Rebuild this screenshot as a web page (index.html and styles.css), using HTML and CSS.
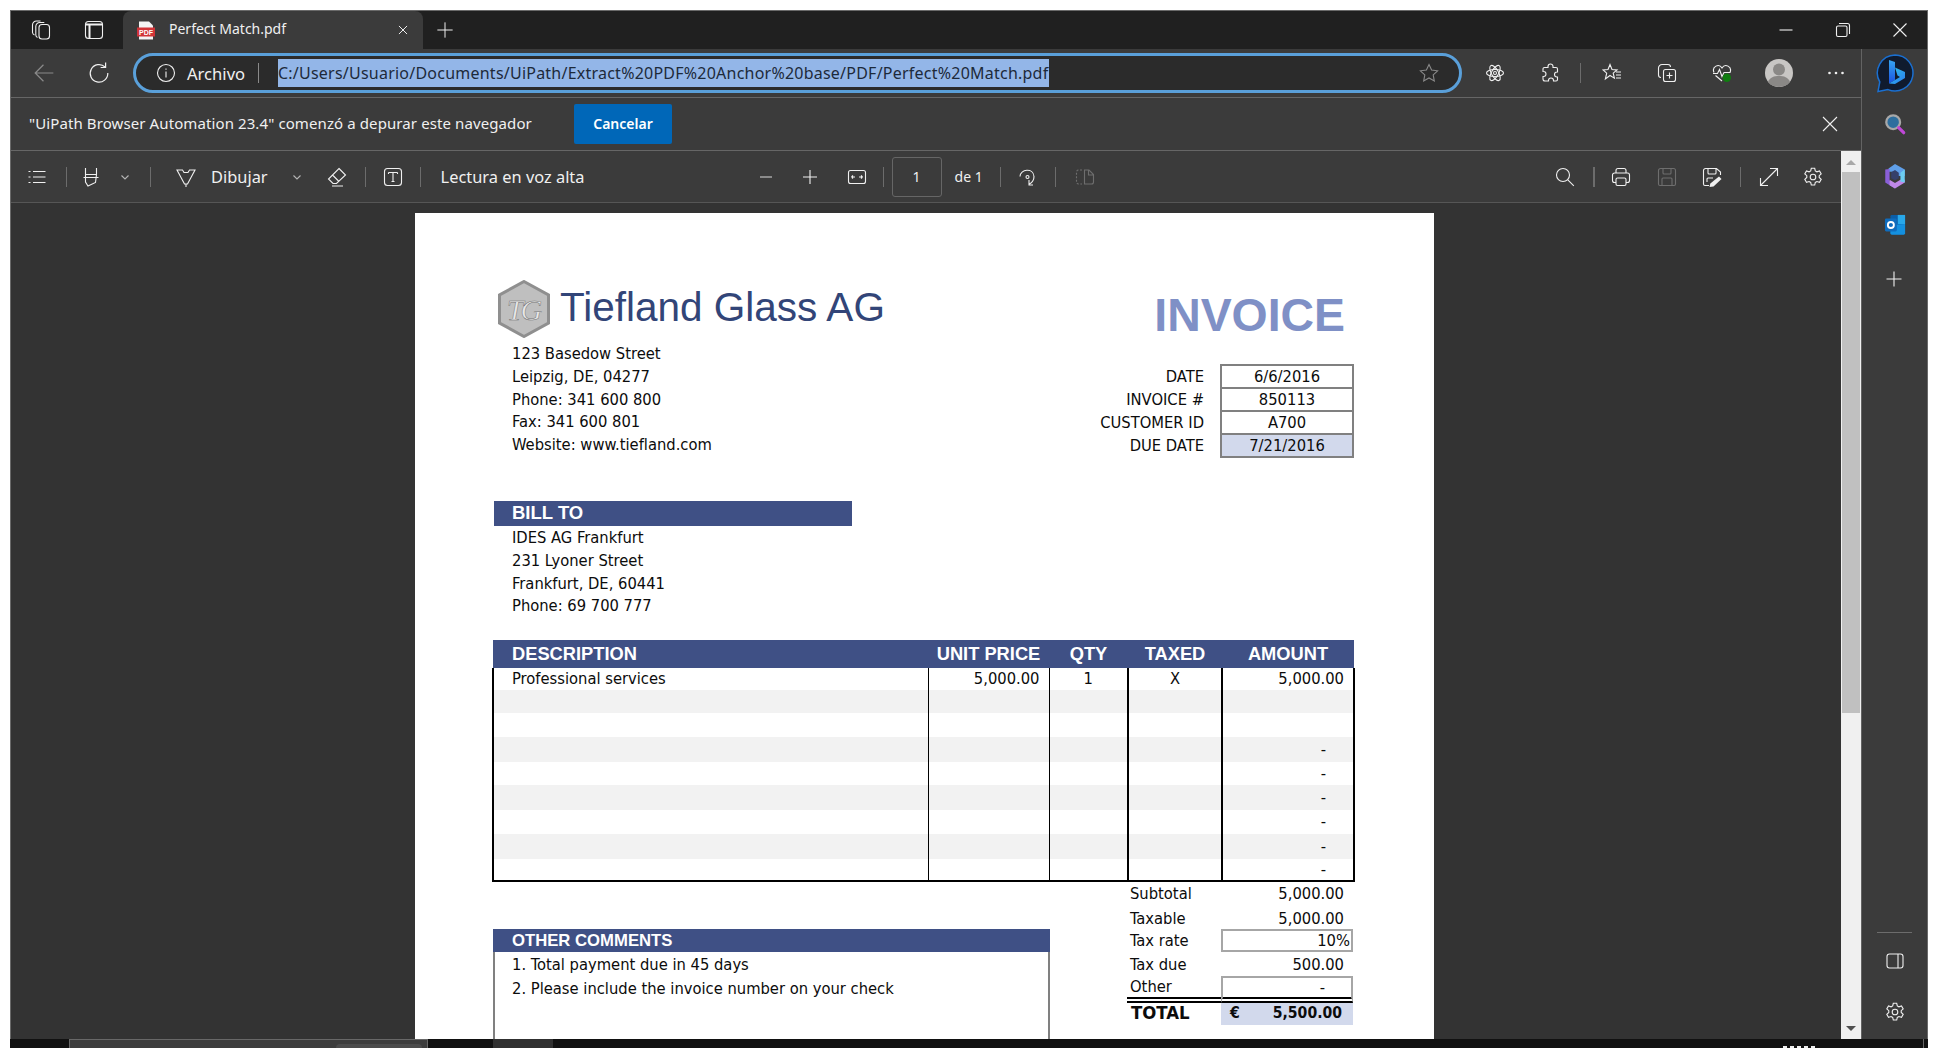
FILE: index.html
```html
<!DOCTYPE html>
<html lang="es">
<head>
    <meta charset="UTF-8">
    <title>Perfect Match.pdf</title>
    <link rel="stylesheet" href="styles.css">
</head>
<body>
<div class="window">
    <div class="titlebar">
        <span class="ico t-work"><svg viewBox="0 0 20 20"><rect x="8" y="4.500" width="10.500" height="14.500" rx="3"/><path d="M6.500 17.500A3 3 0 0 1 4.800 15V6.500a4 4 0 0 1 4-4h4.500M3.500 15A3 3 0 0 1 1.500 12.500V5a4 4 0 0 1 4-4h4"/></svg></span>
        <span class="ico t-tabs"><svg viewBox="0 0 20 20"><rect x="1.500" y="1.500" width="17" height="17" rx="3"/><path class="fat" d="M2 4.500h16M5.500 5v13"/></svg></span>
        <div class="tab">
            <svg class="pdf-icon" viewBox="0 0 20 20"><path class="sheet-ic" d="M3 1h10l4 4v14H3z"/><rect class="pdf-red" x="1" y="7" width="18" height="9"/><text class="pdf-text" x="10" y="14.500" text-anchor="middle">PDF</text></svg>
            <span class="tab-title">Perfect Match.pdf</span>
            <span class="ico tab-close"><svg viewBox="0 0 20 20"><path d="M5.500 5.500l9 9M14.500 5.500l-9 9"/></svg></span>
        </div>
        <span class="ico t-new"><svg viewBox="0 0 20 20"><path d="M10 1.500v17M1.500 10h17"/></svg></span>
        <div class="win-controls">
            <span class="ico"><svg viewBox="0 0 20 20"><path d="M3.500 10h13"/></svg></span>
            <span class="ico"><svg viewBox="0 0 20 20"><rect x="3.500" y="6" width="10.500" height="10.500" rx="1.500"/><path d="M6 3.500h8.500a2 2 0 0 1 2 2V14"/></svg></span>
            <span class="ico"><svg viewBox="0 0 20 20"><path d="M3.500 3.500l13 13M16.500 3.500l-13 13"/></svg></span>
        </div>
    </div>

    <div class="frame">
        <div class="main">
            <div class="toolbar">
                <span class="ico b-back dim"><svg viewBox="0 0 20 20"><path d="M18.500 10H2M9.500 2.500L2 10l7.500 7.500"/></svg></span>
                <span class="ico b-reload"><svg viewBox="0 0 20 20"><path d="M15.500 4.500A8 8 0 1 0 18 10M16 0.500v4.500h-4.500"/></svg></span>
                <div class="omnibox">
                    <span class="ico o-info"><svg viewBox="0 0 20 20"><circle cx="10" cy="10" r="8.500"/><path d="M10 8.500v6M10 5.500v1.200"/></svg></span>
                    <span class="o-label">Archivo</span>
                    <span class="o-sep"></span>
                    <span class="o-url">C:/Users/Usuario/Documents/UiPath/Extract%20PDF%20Anchor%20base/PDF/Perfect%20Match.pdf</span>
                    <span class="ico o-star dim"><svg viewBox="0 0 20 20"><path d="M10 1.500l2.600 5.500 6 .8-4.400 4.100 1.100 6L10 15l-5.300 2.900 1.100-6L1.400 7.800l6-.8z"/></svg></span>
                </div>
                <span class="ico b-atom"><svg viewBox="0 0 20 20"><ellipse cx="10" cy="10" rx="8.500" ry="3.500"/><ellipse cx="10" cy="10" rx="8.500" ry="3.500" transform="rotate(60 10 10)"/><ellipse cx="10" cy="10" rx="8.500" ry="3.500" transform="rotate(120 10 10)"/><circle cx="10" cy="10" r="1.500"/></svg></span>
                <span class="ico b-puzzle"><svg viewBox="0 0 20 20"><path d="M8 3.500a2.500 2.500 0 0 1 5 0v1h3A1.500 1.500 0 0 1 17.500 6v3H17a2.500 2.500 0 0 0 0 5h.5v2.500A1.500 1.500 0 0 1 16 18h-2.500v-.5a2.500 2.500 0 0 0-5 0v.5H5a2 2 0 0 1-2-2v-2.500h.5a2.500 2.500 0 0 0 0-5H3V6a1.500 1.500 0 0 1 1.500-1.500H8z"/></svg></span>
                <span class="bar-sep b-sep"></span>
                <span class="ico b-fav"><svg viewBox="0 0 20 20"><path d="M8 1.500l2 5 5 .4-3.800 3.200 1.200 5L8 12.500 3.400 16l1.300-5.800L1 6.900l5-.4zM14 9h5M14 12h5M14 15h5"/></svg></span>
                <span class="ico b-coll"><svg viewBox="0 0 20 20"><rect x="6.500" y="6.500" width="12" height="12" rx="2"/><path d="M12.500 9.500v6M9.500 12.500h6M4 14.500A2.500 2.500 0 0 1 1.500 12V5A3.500 3.500 0 0 1 5 1.500h6A2.500 2.500 0 0 1 13.500 4"/></svg></span>
                <span class="ico b-heart"><svg viewBox="0 0 20 20"><path d="M2 9.500C-.5 3.500 7 0 10 5c3-5 10.500-1.500 8 4.500M1 10.500h4.500l2-4 2.500 7 2-4h6.500M3.500 12.500L10 18"/><circle class="ok" cx="14.800" cy="14.800" r="4.200"/></svg></span>
                <span class="avatar"><svg viewBox="0 0 28 28"><circle class="av-bg" cx="14" cy="14" r="14"/><circle class="av-fg" cx="14" cy="10.500" r="6"/><path class="av-fg" d="M3 23c2-5 6-6 11-6s9 1 11 6c-5 6.500-17 6.500-22 0z"/></svg></span>
                <span class="ico b-more"><svg viewBox="0 0 20 20"><circle class="fill-ic" cx="3.500" cy="10" r="1.300"/><circle class="fill-ic" cx="10" cy="10" r="1.300"/><circle class="fill-ic" cx="16.500" cy="10" r="1.300"/></svg></span>
            </div>

            <div class="infobar">
                <span class="info-text">"UiPath Browser Automation 23.4" comenzó a depurar este navegador</span>
                <span class="info-btn">Cancelar</span>
                <span class="ico info-close"><svg viewBox="0 0 20 20"><path d="M3 3l14 14M17 3L3 17"/></svg></span>
            </div>

            <div class="pdf-area">
                <div class="pdf-col">
                    <div class="pdfbar">
                        <span class="ico p-list"><svg viewBox="0 0 20 20"><path d="M6 4.500h12.500M6 10h12.500M6 15.500h12.500M1.500 4.500h2M1.500 10h2M1.500 15.500h2"/></svg></span>
                        <span class="bar-sep p-s1"></span>
                        <span class="ico p-mark"><svg viewBox="0 0 20 20"><path d="M4.500 1v6.500h11V1M2.500 10.500h15M4.500 7.500v7.500l2.500 4 7.500-3.500 1-8"/></svg></span>
                        <span class="chev p-c1"><svg viewBox="0 0 10 10"><path d="M1.500 3.500L5 7l3.500-3.500"/></svg></span>
                        <span class="bar-sep p-s2"></span>
                        <span class="ico p-draw"><svg viewBox="0 0 20 20"><path d="M1 3h5.500l1.500 2.500h4L13.500 3H19l-7.500 14h-3zM10 17v3"/></svg></span>
                        <span class="p-word p-dib">Dibujar</span>
                        <span class="chev p-c2"><svg viewBox="0 0 10 10"><path d="M1.500 3.500L5 7l3.500-3.500"/></svg></span>
                        <span class="ico p-erase"><svg viewBox="0 0 20 20"><path d="M12 1.500l6.500 6.500-9 8.500H6L1.500 12zM5.500 8l6.500 6.500M5 19h11"/></svg></span>
                        <span class="bar-sep p-s3"></span>
                        <span class="ico p-tbox"><svg viewBox="0 0 20 20"><rect x="1.500" y="1.500" width="17" height="17" rx="3"/><path d="M5.500 5.500h9M10 5.500v9M5.500 5.500v1.500M14.500 5.500v1.500M8.500 14.500h3"/></svg></span>
                        <span class="bar-sep p-s4"></span>
                        <span class="p-word p-read">Lectura en voz alta</span>

                        <span class="ico p-minus dim"><svg viewBox="0 0 20 20"><path class="fat" d="M4 10h12"/></svg></span>
                        <span class="ico p-plus"><svg viewBox="0 0 20 20"><path d="M10 3v14M3 10h14"/></svg></span>
                        <span class="ico p-fit"><svg viewBox="0 0 20 20"><rect x="1.500" y="3.500" width="17" height="13" rx="2"/><path d="M4.500 10h3.500M4.500 10l1.500-1.500M4.500 10l1.500 1.500M15.500 10H12M15.500 10L14 8.500M15.500 10L14 11.500"/></svg></span>
                        <span class="bar-sep p-s5"></span>
                        <span class="page-box">1</span>
                        <span class="p-of">de 1</span>
                        <span class="bar-sep p-s6"></span>
                        <span class="ico p-rot"><svg viewBox="0 0 20 20"><path d="M3 9.500C3 2 16.500 .5 17 9.500c0 3.500-2 6-4.500 7.500M12 13v5h4"/><circle cx="10.500" cy="10" r="1.500"/></svg></span>
                        <span class="bar-sep p-s7"></span>
                        <span class="ico p-two dim2"><svg viewBox="0 0 20 20"><path stroke-dasharray="2 1.500" d="M7 3H3.500a2 2 0 0 0-2 2v10a2 2 0 0 0 2 2H7"/><path d="M9.500 3h4.500l4.500 4.500V15a2 2 0 0 1-2 2h-7zM13.500 3v5h5"/></svg></span>

                        <span class="ico p-find"><svg viewBox="0 0 20 20"><circle cx="8" cy="8" r="6.500"/><path d="M12.800 12.800l6 6"/></svg></span>
                        <span class="bar-sep p-s8"></span>
                        <span class="ico p-print"><svg viewBox="0 0 20 20"><path d="M5 6V3.500A2 2 0 0 1 7 1.500h6a2 2 0 0 1 2 2V6M5 15.500H3.500a2 2 0 0 1-2-2V8a2 2 0 0 1 2-2h13a2 2 0 0 1 2 2v5.500a2 2 0 0 1-2 2H15"/><rect x="5" y="11" width="10" height="7.500" rx="1.500"/></svg></span>
                        <span class="ico p-save dim2"><svg viewBox="0 0 20 20"><path d="M3.500 1.500h13a2 2 0 0 1 2 2V17a1.500 1.500 0 0 1-1.500 1.500H3A1.500 1.500 0 0 1 1.500 17V3.500a2 2 0 0 1 2-2zM6 1.500V6a1 1 0 0 0 1 1h6a1 1 0 0 0 1-1V1.500M5 18.500V12a1 1 0 0 1 1-1h8a1 1 0 0 1 1 1v6.500"/></svg></span>
                        <span class="ico p-saveas"><svg viewBox="0 0 20 20"><path d="M7 18.500H3A1.500 1.500 0 0 1 1.500 17V3.500a2 2 0 0 1 2-2h11l4 3.500v3M6 1.500V6a1 1 0 0 0 1 1h6a1 1 0 0 0 1-1V1.500M5 15v-3a1 1 0 0 1 1-1h5"/><path class="fill-ic" d="M17 9.500l2.500 2.500-8 7.500-4 .5 .8-3.500z"/></svg></span>
                        <span class="bar-sep p-s9"></span>
                        <span class="ico p-full"><svg viewBox="0 0 20 20"><path d="M1.500 18.500l17-17M11 1.500h7.500V9M1.500 11v7.500H9"/></svg></span>
                        <span class="ico p-gear"><svg viewBox="0 0 20 20"><path d="M8.300 1.300h3.400l.6 2.600 1.600.9 2.600-.8 1.700 2.900-2 1.800v1.800l2 1.900-1.700 2.900-2.600-.8-1.600.9-.6 2.600H8.300l-.6-2.600-1.600-.9-2.600.8-1.700-2.900 2-1.900V8.700l-2-1.800 1.700-2.900 2.600.8 1.600-.9z"/><circle cx="10" cy="10" r="2.800"/></svg></span>
                    </div>

                    <div class="viewer">
                        <div class="sheet">
                            <div class="top">
                                <div class="company">
                                    <div class="brand">
                                        <svg class="logo" viewBox="0 0 52 58"><path class="hex" d="M26 1.500L50.500 15v28L26 56.500 1.500 43V15z"/><text class="hex-text" x="25" y="40" text-anchor="middle">TG</text></svg>
                                        <span class="brand-name">Tiefland Glass AG</span>
                                    </div>
                                    <div class="address">
                                        <div>123 Basedow Street</div>
                                        <div>Leipzig, DE, 04277</div>
                                        <div>Phone: 341 600 800</div>
                                        <div>Fax: 341 600 801</div>
                                        <div>Website: www.tiefland.com</div>
                                    </div>
                                </div>
                                <div class="invoice-head">
                                    <div class="invoice-title">INVOICE</div>
                                    <table class="meta">
                                        <tr><th>DATE</th><td>6/6/2016</td></tr>
                                        <tr><th>INVOICE #</th><td>850113</td></tr>
                                        <tr><th>CUSTOMER ID</th><td>A700</td></tr>
                                        <tr><th>DUE DATE</th><td class="tint">7/21/2016</td></tr>
                                    </table>
                                </div>
                            </div>

                            <div class="bill-head">BILL TO</div>
                            <div class="address bill-lines">
                                <div>IDES AG Frankfurt</div>
                                <div>231 Lyoner Street</div>
                                <div>Frankfurt, DE, 60441</div>
                                <div>Phone: 69 700 777</div>
                            </div>

                            <table class="items">
                                <colgroup><col class="c1"><col class="c2"><col class="c3"><col class="c4"><col class="c5"></colgroup>
                                <thead>
                                    <tr><th class="left">DESCRIPTION</th><th>UNIT PRICE</th><th>QTY</th><th>TAXED</th><th>AMOUNT</th></tr>
                                </thead>
                                <tbody>
                                    <tr><td class="left">Professional services</td><td class="num">5,000.00</td><td>1</td><td>X</td><td class="num">5,000.00</td></tr>
                                    <tr><td></td><td></td><td></td><td></td><td></td></tr>
                                    <tr><td></td><td></td><td></td><td></td><td></td></tr>
                                    <tr><td></td><td></td><td></td><td></td><td class="num dash">-</td></tr>
                                    <tr><td></td><td></td><td></td><td></td><td class="num dash">-</td></tr>
                                    <tr><td></td><td></td><td></td><td></td><td class="num dash">-</td></tr>
                                    <tr><td></td><td></td><td></td><td></td><td class="num dash">-</td></tr>
                                    <tr><td></td><td></td><td></td><td></td><td class="num dash">-</td></tr>
                                    <tr><td></td><td></td><td></td><td></td><td class="num dash">-</td></tr>
                                </tbody>
                            </table>

                            <div class="bottom">
                                <div class="comments">
                                    <div class="comments-head">OTHER COMMENTS</div>
                                    <div class="comments-body">
                                        <div>1. Total payment due in 45 days</div>
                                        <div>2. Please include the invoice number on your check</div>
                                    </div>
                                </div>
                                <table class="totals">
                                    <tr class="r-sub"><th>Subtotal</th><td>5,000.00</td></tr>
                                    <tr class="r-taxable"><th>Taxable</th><td>5,000.00</td></tr>
                                    <tr class="r-rate"><th>Tax rate</th><td>10%</td></tr>
                                    <tr class="r-due"><th>Tax due</th><td>500.00</td></tr>
                                    <tr class="r-other"><th>Other</th><td>-</td></tr>
                                    <tr class="r-total"><th>TOTAL</th><td><div class="total-val"><span>€</span><span>5,500.00</span></div></td></tr>
                                </table>
                            </div>
                        </div>
                    </div>
                </div>
                <div class="scrollbar">
                    <span class="arrow-up"></span>
                    <div class="thumb"></div>
                    <span class="arrow-down"></span>
                </div>
            </div>
        </div>

        <div class="sidebar">
            <svg class="bing" viewBox="0 0 40 40">
                <defs>
                    <linearGradient id="bingStem" x1="0" y1="0" x2="0" y2="1"><stop offset="0" stop-color="#37a6f2"/><stop offset="1" stop-color="#1a52e0"/></linearGradient>
                    <linearGradient id="bingWave" x1="0" y1="0" x2="1" y2="1"><stop offset="0" stop-color="#2fc4e8"/><stop offset="1" stop-color="#2a7cf0"/></linearGradient>
                </defs>
                <path class="bing-ring" d="M20 2a18 18 0 1 1-7 34.600L3 38.500l1.800-9.500A18 18 0 0 1 20 2z"/>
                <path fill="url(#bingStem)" d="M14 7l6 2v18l-6 3.500z"/>
                <path fill="url(#bingWave)" d="M20 14.500l10 4.500v6L20 31l-6-.500 11-6.500-2.500-1.500z"/>
            </svg>
            <svg class="side-ic s-search" viewBox="0 0 24 24"><circle class="sr-glass" cx="10" cy="10" r="7.500"/><path class="sr-handle" d="M16 16l5.500 5.500"/></svg>
            <svg class="side-ic s-copilot" viewBox="0 0 24 24"><path class="cp-a" d="M12 1l9 5v6h-6l-3-4H6V5z"/><path class="cp-b" d="M3 6l4-.5v11l5 3v4l-9-5.500z"/><path class="cp-e" d="M7 15.500l5 3 5-3h4V18l-9 5.500L7 20.500z"/><path class="cp-c" d="M21 6v12l-4-1V9z"/><path class="cp-d" d="M8.500 8.500l3.500-2 3.500 2.500v5L12 16l-3.500-2z"/></svg>
            <svg class="side-ic s-outlook" viewBox="0 0 24 24"><rect class="ol-back" x="7" y="1" width="16" height="21" rx="1.500"/><path class="ol-light" d="M15 1h8v10h-8z"/><path class="ol-mail" d="M7 12l16-1v10a1.500 1.500 0 0 1-1.500 1.500H8.500A1.500 1.500 0 0 1 7 21z"/><rect class="ol-front" x="1" y="5" width="13" height="14" rx="1.500"/><circle class="ol-o" cx="7.500" cy="12" r="3.300"/></svg>
            <span class="ico s-plus"><svg viewBox="0 0 20 20"><path d="M10 2.500v15M2.500 10h15"/></svg></span>
            <div class="side-foot">
                <span class="side-line"></span>
                <span class="ico s-panel"><svg viewBox="0 0 20 20"><rect x="2" y="3" width="16" height="14" rx="2.500"/><path d="M13 3v14"/></svg></span>
                <span class="ico s-gear"><svg viewBox="0 0 20 20"><path d="M8.300 1.300h3.400l.6 2.600 1.600.9 2.600-.8 1.700 2.900-2 1.800v1.800l2 1.900-1.700 2.900-2.600-.8-1.600.9-.6 2.600H8.300l-.6-2.600-1.600-.9-2.600.8-1.700-2.900 2-1.900V8.700l-2-1.800 1.700-2.900 2.600.8 1.600-.9z"/><circle cx="10" cy="10" r="2.800"/></svg></span>
            </div>
        </div>
    </div>
</div>
<div class="taskbar">
    <span class="tb-thumb"><span class="tb-inner"></span></span>
    <span class="tb-app"></span>
    <span class="tb-clock"></span>
    <span class="tb-line"></span>
</div>
</body>
</html>
```

FILE: styles.css
```css
* {
    box-sizing: border-box;
}
html, body {
    margin: 0;
    height: 1048px;
    overflow: hidden;
    background-color: #fff;
}
body {
    padding: 10px 10px 0;
    font-family: "Noto Sans", "Open Sans", sans-serif;
    color: #f0f0f0;
}

/* icons */
.ico {
    display: inline-flex;
    align-items: center;
    justify-content: center;
    flex: none;
    width: 20px;
    height: 20px;
}
svg {
    display: block;
    flex: none;
}
.ico svg {
    width: 100%;
    height: 100%;
}
.ico svg, .chev svg {
    fill: none;
    stroke: #f0f0f0;
    stroke-width: 1.1;
}
.ico .fat {
    stroke-width: 2;
}
.ico .fill-ic {
    fill: #f0f0f0;
    stroke: none;
}
.dim svg {
    stroke: #8a8a8a;
}
.dim2 svg {
    stroke: #6e6e6e;
}

/* window */
.window {
    width: 1918px;
    height: 1029px;
    display: flex;
    flex-direction: column;
    background-color: #3b3b3b;
    border: solid #6a6a6a;
    border-width: 1px 1px 0 1px;
}
.titlebar {
    height: 38px;
    flex: none;
    display: flex;
    align-items: center;
    background-color: #202020;
}
.t-work { margin-left: 20px; }
.t-tabs { margin-left: 33px; }
.tab {
    width: 300px;
    height: 38px;
    margin-left: 19px;
    display: flex;
    align-items: center;
    background-color: #3b3b3b;
    border-radius: 8px 8px 0 0;
    padding-left: 13px;
}
.pdf-icon {
    width: 20px;
    height: 21px;
}
.sheet-ic { fill: #f4f4f4; }
.pdf-red { fill: #d13438; }
.pdf-text {
    font-family: "Liberation Sans", sans-serif;
    font-size: 7px;
    font-weight: bold;
    fill: #fff;
}
.tab-title {
    width: 225px;
    margin: -3px 0 0 13px;
    font-size: 14px;
    white-space: nowrap;
}
.tab-close {
    width: 18px;
    height: 18px;
}
.t-new {
    width: 18px;
    height: 18px;
    margin-left: 13px;
}
.win-controls {
    margin-left: auto;
    display: flex;
    gap: 37px;
    margin-right: 17px;
}

.frame {
    flex: 1;
    min-height: 0;
    display: flex;
}
.main {
    width: 1851px;
    display: flex;
    flex-direction: column;
    border-right: 1px solid #636363;
}

/* address row */
.toolbar {
    height: 49px;
    flex: none;
    display: flex;
    align-items: center;
    border-bottom: 1px solid #666;
}
.b-back { margin-left: 22px; width: 22px; height: 22px; }
.b-reload { margin-left: 33px; width: 22px; height: 22px; }
.omnibox {
    width: 1329px;
    height: 40px;
    margin-left: 23px;
    display: flex;
    align-items: center;
    background-color: #2b2b2b;
    border: 3px solid #5aa0da;
    border-radius: 20px;
    font-size: 16px;
}
.o-info { margin-left: 20px; }
.o-label { width: 59px; margin-left: 11px; font-size: 16.6px; white-space: nowrap; }
.o-sep {
    width: 1px;
    height: 20px;
    margin-left: 12px;
    background-color: #8a8a8a;
}
.o-url {
    margin-left: 19px;
    width: 771px;
    height: 28px;
    line-height: 28px;
    letter-spacing: .23px;
    background-color: #93b6e8;
    color: #1d2a3a;
    white-space: nowrap;
    overflow: hidden;
}
.o-star { margin-left: auto; margin-right: 20px; }
.b-atom { margin-left: 23px; }
.b-puzzle { margin-left: 35px; }
.bar-sep {
    flex: none;
    width: 1px;
    height: 20px;
    background-color: #6c6c6c;
}
.b-sep { margin-left: 20px; height: 20px; }
.b-fav { margin-left: 21px; }
.b-coll { margin-left: 35px; }
.b-heart { margin-left: 35px; }
.ico .ok { fill: #107c10; stroke: none; }
.avatar {
    width: 28px;
    height: 28px;
    margin-left: 33px;
}
.av-bg { fill: #c8c6c4; }
.av-fg { fill: #8a8886; }
.b-more { margin-left: 33px; }

/* debugging bar */
.infobar {
    height: 53px;
    flex: none;
    display: flex;
    align-items: center;
    padding-left: 18px;
    font-size: 14px;
    border-bottom: 1px solid #666;
}
.info-text {
    width: 545px;
    margin-top: -2px;
    font-size: 15px;
    letter-spacing: .1px;
    white-space: nowrap;
}
.info-btn {
    width: 98px;
    height: 40px;
    padding-bottom: 2px;
    display: flex;
    align-items: center;
    justify-content: center;
    background-color: #0067b8;
    border-radius: 2px;
    font-weight: 600;
    color: #fff;
}
.info-close {
    margin-left: auto;
    margin-right: 21px;
}

/* pdf toolbar and page */
.pdf-area {
    flex: 1;
    min-height: 0;
    display: flex;
}
.pdf-col {
    width: 1830px;
    display: flex;
    flex-direction: column;
}
.pdfbar {
    height: 52px;
    flex: none;
    display: flex;
    align-items: center;
    font-size: 16.4px;
    border-bottom: 1px solid #565656;
}
.chev {
    width: 10px;
    height: 10px;
    flex: none;
}
.chev svg {
    stroke: #b5b5b5;
}
.p-word { white-space: nowrap; }
.p-list { margin-left: 16px; }
.p-s1 { margin-left: 19px; }
.p-mark { margin-left: 14px; }
.p-c1 { margin-left: 19px; }
.p-s2 { margin-left: 20px; }
.p-draw { margin-left: 25px; }
.p-dib { margin-left: 15px; }
.p-c2 { margin-left: 24px; }
.p-erase { margin-left: 25px; }
.p-s3 { margin-left: 18px; }
.p-tbox { margin-left: 17px; }
.p-s4 { margin-left: 17px; }
.p-read { margin-left: 20px; width: 315px; }
.p-plus { margin-left: 24px; }
.p-minus { margin-left: 0; }
.p-fit { margin-left: 27px; }
.p-s5 { margin-left: 16px; }
.page-box {
    width: 50px;
    height: 40px;
    margin-left: 8px;
    display: flex;
    align-items: center;
    justify-content: center;
    font-size: 14px;
    border: 1px solid #666;
    border-radius: 3px;
}
.p-of {
    margin-left: 13px;
    width: 45px;
    font-size: 14px;
    white-space: nowrap;
}
.p-s6 { margin-left: 0; }
.p-rot { margin-left: 16px; }
.p-s7 { margin-left: 18px; }
.p-two { margin-left: 19px; }
.p-find { margin-left: 460px; }
.p-s8 { margin-left: 18px; width: 2px; }
.p-print { margin-left: 16px; }
.p-save { margin-left: 26px; }
.p-saveas { margin-left: 25px; }
.p-s9 { margin-left: 18px; }
.p-full { margin-left: 18px; }
.p-gear { margin-left: 24px; }

.viewer {
    flex: 1;
    min-height: 0;
    padding: 10px 0 0 404px;
    background-color: #333;
    overflow: hidden;
}
.scrollbar {
    width: 20px;
    display: flex;
    flex-direction: column;
    align-items: center;
    background-color: #f0f0f0;
    position: relative;
}
.thumb {
    width: 18px;
    height: 541px;
    margin-top: 21px;
    background-color: #c0c0c0;
}
.arrow-up, .arrow-down {
    position: absolute;
    left: 5px;
    border-left: 5px solid transparent;
    border-right: 5px solid transparent;
}
.arrow-up {
    top: 9px;
    border-bottom: 5px solid #a8a8a8;
}
.arrow-down {
    bottom: 8px;
    border-top: 5px solid #505050;
}

/* invoice sheet */
.sheet {
    width: 1019px;
    height: 827px;
    padding: 67px 80px 0 78px;
    background-color: #fff;
    color: #0c0c0c;
    overflow: hidden;
    font-family: "DejaVu Sans", sans-serif;
    font-stretch: condensed;
    font-size: 16.4px;
}
.top {
    display: flex;
    justify-content: space-between;
}
.brand {
    height: 58px;
    display: flex;
    align-items: center;
    padding-left: 5px;
    gap: 10px;
}
.logo {
    width: 52px;
    height: 58px;
}
.hex {
    fill: #bfbfbf;
    stroke: #8f8f8f;
    stroke-width: 3;
}
.hex-text {
    font-family: "Liberation Serif", serif;
    font-style: italic;
    font-size: 30px;
    letter-spacing: -3px;
    fill: #e8e8e8;
    stroke: #707070;
    stroke-width: 0.5;
}
.brand-name {
    font-family: "Liberation Sans", sans-serif;
    font-stretch: normal;
    font-size: 40.5px;
    line-height: 48px;
    margin-top: -4px;
    color: #324578;
    white-space: nowrap;
}
.address {
    padding-left: 19px;
    line-height: 22.75px;
}
.company .address {
    margin-top: 5px;
}
.bill-lines {
    padding-top: 1px;
}
.invoice-head {
    display: flex;
    flex-direction: column;
    align-items: flex-end;
}
.invoice-title {
    margin-top: 8px;
    padding-right: 9px;
    font-family: "Liberation Sans", sans-serif;
    font-stretch: normal;
    font-size: 46.4px;
    font-weight: bold;
    line-height: 54px;
    color: #7f90c6;
}
.meta {
    margin-top: 22px;
    border-collapse: collapse;
    line-height: 20px;
}
.meta th {
    padding: 0 16px 0 0;
    height: 23px;
    text-align: right;
    font-weight: normal;
    white-space: nowrap;
}
.meta td {
    width: 132px;
    padding: 0;
    text-align: center;
    border: 2px solid #808080;
}
.tint {
    background-color: #d2d9ec;
}
.bill-head, .comments-head {
    font-family: "Liberation Sans", sans-serif;
    font-stretch: normal;
    font-weight: bold;
    color: #fff;
    background-color: #3f5085;
    padding-left: 19px;
}
.bill-head {
    width: 358px;
    height: 25px;
    margin: 43px 0 0 1px;
    font-size: 18.5px;
    line-height: 23px;
    padding-left: 18px;
}
.items {
    width: 861px;
    margin: 22px 0 0 -1px;
    table-layout: fixed;
    border-collapse: collapse;
    border-bottom: 2px solid #000;
    line-height: 20px;
}
.c1 { width: 435px; }
.c2 { width: 121px; }
.c3 { width: 79px; }
.c4 { width: 94px; }
.c5 { width: 132px; }
.items th {
    height: 28px;
    padding: 0;
    background-color: #3f5085;
    color: #fff;
    font-family: "Liberation Sans", sans-serif;
    font-stretch: normal;
    font-size: 18.3px;
    white-space: nowrap;
}
.items th.left {
    padding-left: 19px;
    text-align: left;
}
.items td {
    padding: 0;
    text-align: center;
    border-left: 1px solid #000;
}
.items td.left {
    padding-left: 18px;
    text-align: left;
}
.items td:first-child {
    border-left-width: 2px;
}
.items td:last-child {
    border-right: 2px solid #000;
}
.items td:nth-child(4), .items td:nth-child(5) {
    border-left-width: 2px;
}
.items td.num {
    text-align: right;
    padding-right: 9px;
}
.items td.dash {
    padding-right: 27px;
}
.items tbody tr:nth-child(even) {
    background-color: #f2f2f2;
}
.items tbody tr:nth-child(1) td, .items tbody tr:nth-child(9) td { height: 22px; }
.items tbody tr:nth-child(2) td, .items tbody tr:nth-child(5) td { height: 23px; }
.items tbody tr:nth-child(3) td, .items tbody tr:nth-child(7) td { height: 24px; }
.items tbody tr:nth-child(4) td, .items tbody tr:nth-child(6) td, .items tbody tr:nth-child(8) td { height: 25px; }
.bottom {
    display: flex;
    align-items: flex-start;
}
.comments {
    width: 557px;
    margin-top: 47px;
}
.comments-head {
    height: 23px;
    font-size: 16.7px;
    line-height: 23px;
}
.comments-body {
    height: 120px;
    padding: 1px 0 0 17px;
    line-height: 24px;
    border: solid #808080;
    border-width: 0 2px;
}
.totals {
    width: 226px;
    margin-left: 77px;
    border-collapse: separate;
    border-spacing: 0;
    line-height: 19px;
}
.totals th {
    width: 94px;
    padding: 0 0 0 3px;
    text-align: left;
    font-weight: normal;
}
.totals td {
    padding: 0 9px 0 0;
    text-align: right;
}
.r-sub th, .r-sub td { height: 23px; }
.r-taxable th, .r-taxable td { height: 24px; padding-top: 2px; }
.r-due th, .r-due td { height: 24px; }
.r-rate th, .r-rate td { height: 23px; }
.totals .r-rate td {
    border: 2px solid #a6a6a6;
    padding-right: 1px;
}
.totals .r-other th {
    height: 27px;
    border-bottom: 6px double #000;
}
.totals .r-other td {
    height: 27px;
    padding-right: 26px;
    border: solid #a6a6a6;
    border-width: 2px 2px 0;
    border-bottom: 6px double #000;
}
.totals .r-total th {
    height: 22px;
    padding: 0 0 3px 4px;
    font-weight: bold;
    font-size: 18.4px;
}
.totals .r-total td {
    height: 22px;
    background-color: #d2d9ec;
    font-size: 15.6px;
    font-weight: bold;
    padding: 0 11px 2px 0;
}
.total-val {
    display: flex;
    justify-content: space-between;
    padding-left: 9px;
}

/* right side panel */
.sidebar {
    flex: 1;
    display: flex;
    flex-direction: column;
    align-items: center;
}
.bing {
    width: 40px;
    height: 40px;
    margin-top: 4px;
}
.bing-ring {
    fill: #101b2e;
    stroke: #1a6fd0;
    stroke-width: 1.5;
}
.side-ic {
    width: 22px;
    height: 22px;
}
.s-search { margin-top: 20px; }
.sr-glass {
    fill: #2d6e9e;
    stroke: #a8a8a8;
    stroke-width: 2.5;
}
.sr-handle {
    fill: none;
    stroke: #c048d8;
    stroke-width: 3.5;
    stroke-linecap: round;
}
.s-copilot {
    width: 26px;
    height: 26px;
    margin-top: 28px;
}
.cp-a { fill: #5f9fe8; }
.cp-b { fill: #8a5fd8; }
.cp-c { fill: #6ccdf0; }
.cp-d { fill: #35406a; }
.cp-e { fill: #c088e8; }
.s-outlook { margin-top: 25px; }
.ol-back { fill: #0a5ea8; }
.ol-light { fill: #28a8ea; }
.ol-mail { fill: #1490df; }
.ol-front { fill: #0f6cbd; }
.ol-o {
    fill: none;
    stroke: #fff;
    stroke-width: 2;
}
.s-plus {
    margin-top: 33px;
    margin-right: 2px;
}
.side-foot {
    margin-top: auto;
    display: flex;
    flex-direction: column;
    align-items: center;
    padding-bottom: 17px;
}
.side-line {
    width: 35px;
    height: 1px;
    background-color: #6c6c6c;
}
.s-panel { margin-top: 18px; }
.s-gear { margin-top: 31px; }

/* strip of the taskbar left in the shot */
.taskbar {
    height: 9px;
    width: 1918px;
    background-color: #111;
    display: flex;
    overflow: hidden;
}
.tb-thumb {
    width: 359px;
    margin-left: 59px;
    background-color: #3d3d3d;
    border: solid #686868;
    border-width: 1px 1px 0;
    padding: 4px 5px 0 266px;
}
.tb-inner {
    display: block;
    height: 5px;
    background-color: #4c4c4c;
    border-radius: 4px 4px 0 0;
}
.tb-app {
    width: 60px;
    margin-left: 65px;
    background-color: #303030;
}
.tb-clock {
    width: 32px;
    height: 2px;
    margin: 7px 0 0 1230px;
    background: repeating-linear-gradient(90deg, #eee 0 4px, transparent 4px 7px);
}
.tb-line {
    width: 1px;
    margin-left: 108px;
    background-color: #666;
}
```
